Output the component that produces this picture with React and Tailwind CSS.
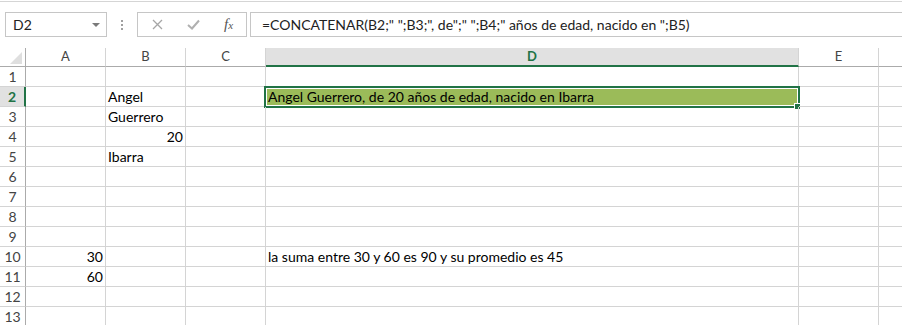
import React from 'react';

const COLS = ['A', 'B', 'C', 'D', 'E', 'F'];
const ROWS = [1, 2, 3, 4, 5, 6, 7, 8, 9, 10, 11, 12, 13];

// cell contents, r = right aligned (numbers)
const CELLS = {
  'B2': { v: 'Angel' },
  'B3': { v: 'Guerrero' },
  'B4': { v: '20', r: true },
  'B5': { v: 'Ibarra' },
  'D2': { v: 'Angel Guerrero, de 20 años de edad, nacido en Ibarra' },
  'A10': { v: '30', r: true },
  'D10': { v: 'la suma entre 30 y 60 es 90 y su promedio es 45' },
  'A11': { v: '60', r: true },
};

const FORMULA = '=CONCATENAR(B2;" ";B3;", de";" ";B4;" años de edad, nacido en ";B5)';

const FormulaBar = () => (
  <div className="flex items-center h-[25px] mt-[10px]">
    <div className="ml-[5px] w-[102px] h-[25px] border border-[#c6c6c6] flex items-center justify-between pl-[7px] pr-[6px]">
      <span className="text-[14px] text-[#222]">D2</span>
      <svg width="8" height="4" viewBox="0 0 8 4"><polygon points="0,0 8,0 4,4" fill="#7a7a7a" /></svg>
    </div>
    <div className="w-[30px] flex flex-col items-center gap-[2px]">
      <span className="w-[2px] h-[2px] bg-[#a0a0a0]" />
      <span className="w-[2px] h-[2px] bg-[#a0a0a0]" />
      <span className="w-[2px] h-[2px] bg-[#a0a0a0]" />
    </div>
    <div className="w-[110px] h-[25px] border border-[#c6c6c6] flex items-center">
      <svg className="ml-[14px]" width="11" height="11" viewBox="0 0 11 11">
        <path d="M1 1 L10 10 M10 1 L1 10" stroke="#a6a6a6" strokeWidth="1.3" />
      </svg>
      <svg className="ml-[24px]" width="13" height="11" viewBox="0 0 13 11">
        <path d="M1 6 L5 9.5 L12 1.5" stroke="#b0b0b0" strokeWidth="2" fill="none" />
      </svg>
      <span className="ml-[24px] font-['Liberation_Serif',serif] italic text-[15px] text-[#555] leading-none">
        f<span className="text-[11px]">x</span>
      </span>
    </div>
    <div className="ml-[3px] flex-1 h-[25px] border border-r-0 border-[#c6c6c6] flex items-center pl-[11px]">
      <span className="text-[14px] text-[#222] whitespace-nowrap">{FORMULA}</span>
    </div>
  </div>
);

const ColHeader = ({ k }) => {
  const sel = k === 'D';
  if (sel) {
    return (
      <div className="h-[19px] bg-[#e1e1e1] border-b-2 border-[#217346] flex items-center justify-center border-r border-r-[#d4d4d4]">
        <span className="text-[13px] font-bold text-[#217346]">{k}</span>
      </div>
    );
  }
  // the last column runs past the window, its letter is not in view
  return (
    <div className="h-[19px] border-b border-[#ababab] border-r border-r-[#d4d4d4] flex items-center justify-center">
      {k !== 'F' && <span className="text-[13px] text-[#444]">{k}</span>}
    </div>
  );
};

const RowHeader = ({ n }) => {
  const sel = n === 2;
  return (
    <div
      className={
        sel
          ? 'h-[20px] bg-[#e1e1e1] border-r-2 border-[#217346] border-b border-b-[#d4d4d4] flex items-center justify-center'
          : 'h-[20px] border-r border-[#ababab] border-b border-b-[#d4d4d4] flex items-center justify-center'
      }
    >
      <span className={sel ? 'text-[14px] font-bold text-[#217346]' : 'text-[14px] text-[#444]'}>{n}</span>
    </div>
  );
};

const Cell = ({ id }) => {
  const c = CELLS[id];
  const sel = id === 'D2';
  return (
    <div className="relative h-[20px] border-r border-b border-[#d4d4d4]">
      {sel && (
        <div className="absolute -top-[1px] -left-[2px] -right-[2px] -bottom-[2px] border-2 border-[#217346]">
          <div className="w-full h-full border border-white bg-[#9bbb59]" />
          <div className="absolute -right-[3px] -bottom-[4px] w-[7px] h-[7px] bg-[#217346] border border-white" />
        </div>
      )}
      {c && (
        <div
          className={
            'relative h-full flex items-end pb-[1px] px-[2px] text-[14px] leading-[17px] text-black whitespace-nowrap ' +
            (c.r ? 'justify-end' : 'justify-start')
          }
        >
          {c.v}
        </div>
      )}
    </div>
  );
};

export default function App() {
  return (
    <div className="w-[902px] h-[325px] overflow-hidden bg-white font-['Lato',sans-serif]">
      <div className="h-[2px] border-b border-[#d5d5d5]" />
      <FormulaBar />
      <div className="mt-[11px] w-max grid grid-cols-[26px_80px_80px_80px_533px_80px_80px]">
        <div className="h-[19px] border-b border-r border-[#ababab] relative">
          <svg className="absolute left-[10px] top-[4px]" width="12" height="12" viewBox="0 0 12 12">
            <polygon points="12,0 12,12 0,12" fill="#dfdfdf" />
          </svg>
        </div>
        {COLS.map((k) => (
          <ColHeader key={k} k={k} />
        ))}
        {ROWS.map((n) => (
          <React.Fragment key={n}>
            <RowHeader n={n} />
            {COLS.map((k) => (
              <Cell key={k + n} id={k + n} />
            ))}
          </React.Fragment>
        ))}
      </div>
    </div>
  );
}
